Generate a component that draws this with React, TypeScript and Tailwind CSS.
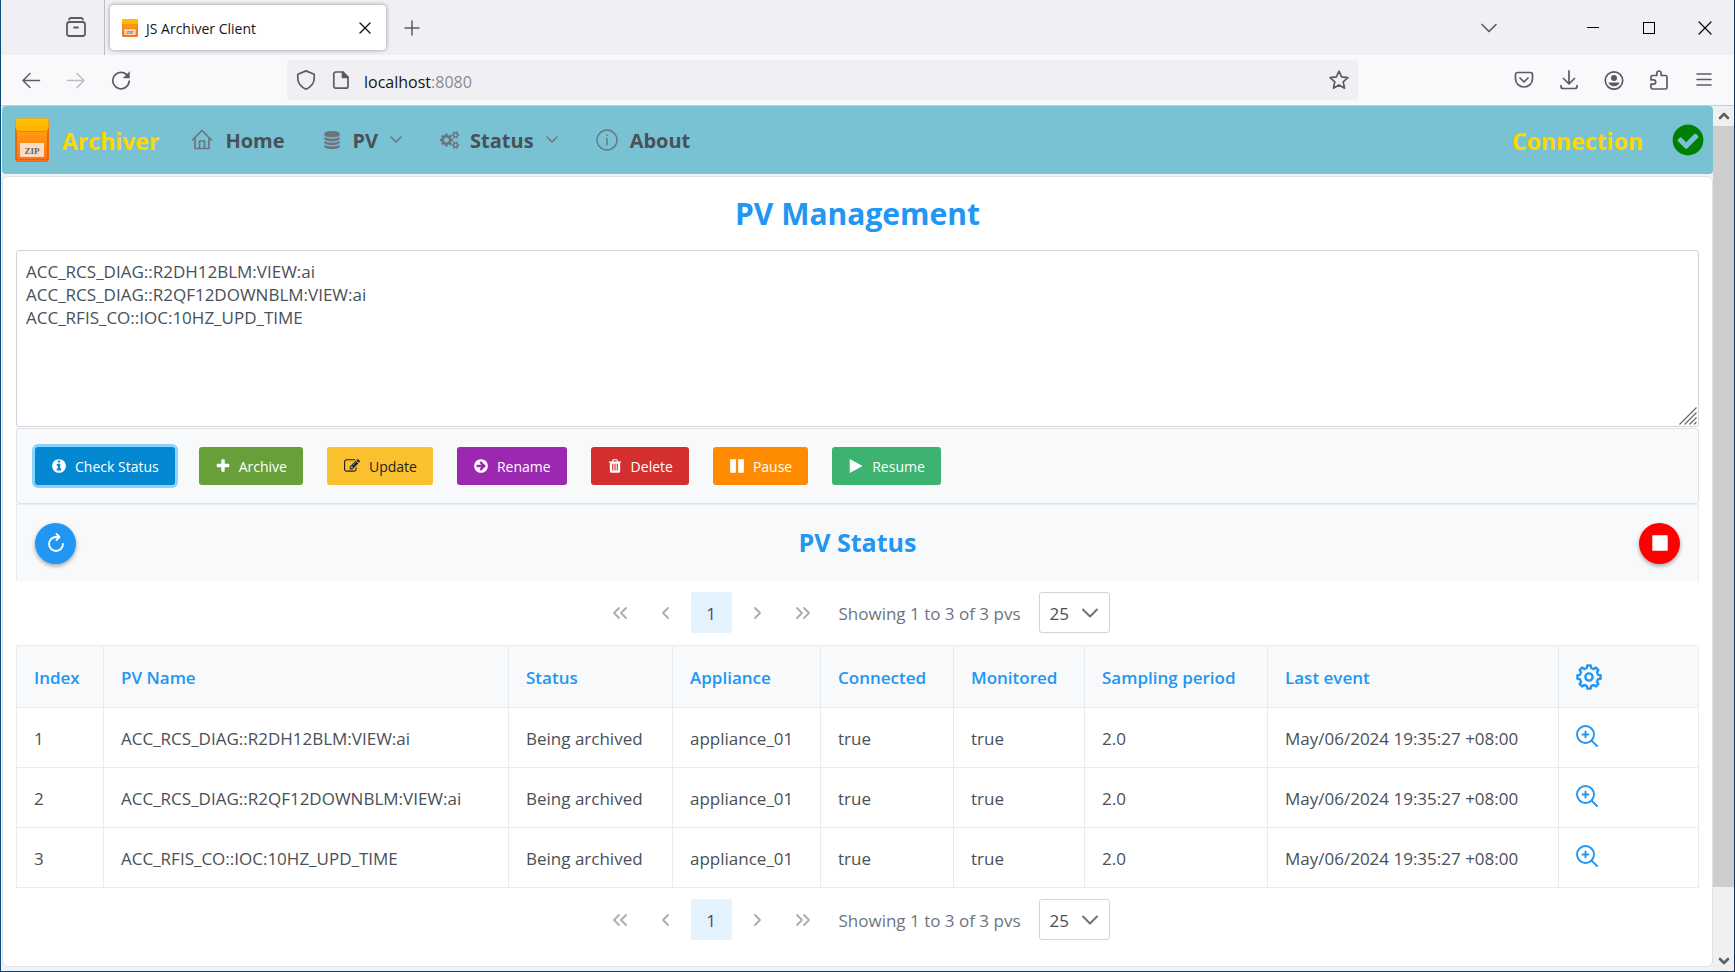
import type { ReactNode } from "react";

const DISC =
  "m252 162q0 209-103 385.5t-279.5 279.5-385.5 103-385.5-103-279.5-279.5-103-385.5 103-385.5 279.5-279.5 385.5-103 385.5 103 279.5 279.5 103 385.5z";

const GLYPHS = {
  info: "M1152 1376v-160q0-14-9-23t-23-9h-96v-512q0-14-9-23t-23-9h-320q-14 0-23 9t-9 23v160q0 14 9 23t23 9h96v320h-96q-14 0-23 9t-9 23v160q0 14 9 23t23 9h448q14 0 23-9t9-23zm-128-896v-160q0-14-9-23t-23-9h-192q-14 0-23 9t-9 23v160q0 14 9 23t23 9h192q14 0 23-9t9-23zm640 416q0 209-103 385.5t-279.5 279.5-385.5 103-385.5-103-279.5-279.5-103-385.5 103-385.5 279.5-279.5 385.5-103 385.5 103 279.5 279.5 103 385.5z",
  plus: "M1600 736v192q0 40-28 68t-68 28h-416v416q0 40-28 68t-68 28h-192q-40 0-68-28t-28-68v-416h-416q-40 0-68-28t-28-68v-192q0-40 28-68t68-28h416v-416q0-40 28-68t68-28h192q40 0 68 28t28 68v416h416q40 0 68 28t28 68z",
  edit: "M888 1184l116-116-152-152-116 116v56h96v96h56zm440-720q-16-16-33 1l-350 350q-17 17-1 33t33-1l350-350q17-17 1-33zm80 594v190q0 119-84.5 203.5t-203.5 84.5h-832q-119 0-203.5-84.5t-84.5-203.5v-832q0-119 84.5-203.5t203.5-84.5h832q63 0 117 25 15 7 18 23 3 17-9 29l-49 49q-14 14-32 8-23-6-45-6h-832q-66 0-113 47t-47 113v832q0 66 47 113t113 47h832q66 0 113-47t47-113v-126q0-13 9-22l64-64q15-15 35-7t20 29zm-96-738l288 288-672 672h-288v-288zm444 132l-92 92-288-288 92-92q28-28 68-28t68 28l152 152q28 28 28 68t-28 68z",
  right:
    "M1413 896q0-27-18-45l-91-91-362-362q-18-18-45-18t-45 18l-91 91q-18 18-18 45t18 45l189 189h-502q-26 0-45 19t-19 45v128q0 26 19 45t45 19h502l-189 189q-19 19-19 45t19 45l91 91q18 18 45 18t45-18l362-362 91-91q18-18 18-45zm251 0q0 209-103 385.5t-279.5 279.5-385.5 103-385.5-103-279.5-279.5-103-385.5 103-385.5 279.5-279.5 385.5-103 385.5 103 279.5 279.5 103 385.5z",
  trash:
    "M704 1376v-704q0-14-9-23t-23-9h-64q-14 0-23 9t-9 23v704q0 14 9 23t23 9h64q14 0 23-9t9-23zm256 0v-704q0-14-9-23t-23-9h-64q-14 0-23 9t-9 23v704q0 14 9 23t23 9h64q14 0 23-9t9-23zm256 0v-704q0-14-9-23t-23-9h-64q-14 0-23 9t-9 23v704q0 14 9 23t23 9h64q14 0 23-9t9-23zm-544-992h448l-48-117q-7-9-17-11h-317q-10 2-17 11zm928 32v64q0 14-9 23t-23 9h-96v948q0 83-47 143.5t-113 60.5h-832q-66 0-113-58.5t-47-141.5v-952h-96q-14 0-23-9t-9-23v-64q0-14 9-23t23-9h309l70-167q15-37 54-63t79-26h320q40 0 79 26t54 63l70 167h309q14 0 23 9t9 23z",
  pause:
    "M1664 192v1408q0 26-19 45t-45 19h-512q-26 0-45-19t-19-45v-1408q0-26 19-45t45-19h512q26 0 45 19t19 45zm-896 0v1408q0 26-19 45t-45 19h-512q-26 0-45-19t-19-45v-1408q0-26 19-45t45-19h512q26 0 45 19t19 45z",
  play: "M1576 927l-1328 738q-23 13-39.500 3t-16.500-36v-1472q0-26 16.500-36t39.500 3l1328 738q23 13 23 31t-23 31z",
  stop: "M1664 192v1408q0 26-19 45t-45 19h-1408q-26 0-45-19t-19-45v-1408q0-26 19-45t45-19h1408q26 0 45 19t19 45z",
  check:
    "M1412 734q0-28-18-46l-91-90q-19-19-45-19t-45 19l-408 407-226-226q-19-19-45-19t-45 19l-91 90q-18 18-18 46 0 27 18 45l362 362q19 19 45 19 27 0 46-19l543-543q18-18 18-45z" +
    DISC,
  database:
    "M896 768q237 0 443-43t325-127v170q0 69-103 128t-280 93.5-385 34.5-385-34.5-280-93.5-103-128v-170q119 84 325 127t443 43zm0 768q237 0 443-43t325-127v170q0 69-103 128t-280 93.5-385 34.5-385-34.5-280-93.5-103-128v-170q119 84 325 127t443 43zm0-384q237 0 443-43t325-127v170q0 69-103 128t-280 93.5-385 34.5-385-34.5-280-93.5-103-128v-170q119 84 325 127t443 43zm0-1152q208 0 385 34.5t280 93.5 103 128v128q0 69-103 128t-280 93.5-385 34.5-385-34.5-280-93.5-103-128v-128q0-69 103-128t280-93.5 385-34.5z",
  cogs: "M896 896q0-106-75-181t-181-75-181 75-75 181 75 181 181 75 181-75 75-181zm768 512q0-52-38-90t-90-38-90 38-38 90q0 53 37.5 90.5t90.5 37.5 90.5-37.5 37.5-90.5zm0-1024q0-52-38-90t-90-38-90 38-38 90q0 53 37.5 90.5t90.5 37.5 90.5-37.5 37.5-90.5zm-384 421v185q0 10-7 19.5t-16 10.5l-155 24q-11 35-32 76 34 48 90 115 7 11 7 20 0 12-7 19-23 30-82.5 89.5t-78.5 59.5q-11 0-21-7l-115-90q-37 19-77 31-11 108-23 155-7 24-30 24h-186q-11 0-20-7.5t-10-17.5l-23-153q-34-10-75-31l-118 89q-7 7-20 7-11 0-21-8-144-133-144-160 0-9 7-19 10-14 41-53t47-61q-23-44-35-82l-152-24q-10-1-17-9.5t-7-19.5v-185q0-10 7-19.5t16-10.5l155-24q11-35 32-76-34-48-90-115-7-11-7-20 0-12 7-20 22-30 82-89t79-59q11 0 21 7l115 90q34-18 77-32 11-108 23-154 7-24 30-24h186q11 0 20 7.5t10 17.5l23 153q34 10 75 31l118-89q8-7 20-7 11 0 21 8 144 133 144 160 0 8-7 19-12 16-42 54t-45 60q23 48 34 82l152 23q10 2 17 10.5t7 19.5zm640 533v140q0 16-149 31-12 27-30 52 51 113 51 138 0 4-4 7-122 71-124 71-8 0-46-47t-52-68q-20 2-30 2t-30-2q-14 21-52 68t-46 47q-2 0-124-71-4-3-4-7 0-25 51-138-18-25-30-52-149-15-149-31v-140q0-16 149-31 13-29 30-52-51-113-51-138 0-4 4-7 4-2 35-20t59-34 30-16q8 0 46 46.5t52 67.5q20-2 30-2t30 2q51-71 92-112l6-2q4 0 124 70 4 3 4 7 0 25-51 138 17 23 30 52 149 15 149 31zm0-1024v140q0 16-149 31-12 27-30 52 51 113 51 138 0 4-4 7-122 71-124 71-8 0-46-47t-52-68q-20 2-30 2t-30-2q-14 21-52 68t-46 47q-2 0-124-71-4-3-4-7 0-25 51-138-18-25-30-52-149-15-149-31v-140q0-16 149-31 13-29 30-52-51-113-51-138 0-4 4-7 4-2 35-20t59-34 30-16q8 0 46 46.5t52 67.5q20-2 30-2t30 2q51-71 92-112l6-2q4 0 124 70 4 3 4 7 0 25-51 138 17 23 30 52 149 15 149 31z",
};

function Glyph({ name, className = "size-4" }: { name: keyof typeof GLYPHS; className?: string }) {
  return (
    <svg viewBox="0 0 1792 1792" fill="currentColor" overflow="visible" aria-hidden="true" className={`shrink-0 ${className}`}>
      <path d={GLYPHS[name]} />
    </svg>
  );
}

function Line({
  children,
  className = "size-5",
  box = 20,
  width = 1.6,
}: {
  children: ReactNode;
  className?: string;
  box?: number;
  width?: number;
}) {
  return (
    <svg
      viewBox={`0 0 ${box} ${box}`}
      fill="none"
      stroke="currentColor"
      strokeWidth={width}
      strokeLinecap="round"
      strokeLinejoin="round"
      aria-hidden="true"
      className={`shrink-0 ${className}`}
    >
      {children}
    </svg>
  );
}

function ZipIcon({ className, id }: { className: string; id: string }) {
  return (
    <svg viewBox="0 0 34 44" preserveAspectRatio="none" aria-hidden="true" className={`shrink-0 ${className}`}>
      <defs>
        <linearGradient id={`${id}-body`} x1="0" y1="0" x2="0" y2="1">
          <stop offset="0" stopColor="#ffae0d" />
          <stop offset="1" stopColor="#ff6f1c" />
        </linearGradient>
        <linearGradient id={`${id}-flap`} x1="0" y1="0" x2="0" y2="1">
          <stop offset="0" stopColor="#ffc400" />
          <stop offset="1" stopColor="#ffb005" />
        </linearGradient>
      </defs>
      <rect x="0.500" y="1" width="33" height="42.500" rx="2.500" fill={`url(#${id}-body)`} stroke="#ee6c10" />
      <path d="M1.500 14v27.500h31V14" fill="none" stroke="#d8600c" strokeWidth="0.800" />
      <path d="M0.500 2.500Q0.500 0.500 2.500 0.500h29Q33.500 0.500 33.500 2.500v8l-2 3h-29l-2-3z" fill={`url(#${id}-flap)`} />
      <path d="M0.500 10.500l2 3h29l2-3" fill="none" stroke="#d9770c" strokeWidth="0.800" />
      <rect x="5" y="25" width="24" height="14" fill="#fcdcc4" />
      <text x="17" y="35.500" textAnchor="middle" fontSize="9" fontWeight="bold" fill="#666" fontFamily="Liberation Serif, serif">
        ZIP
      </text>
    </svg>
  );
}

function ToolButton({ label, children }: { label: string; children: ReactNode }) {
  return (
    <button type="button" aria-label={label} className="flex size-6 items-center justify-center text-[#5b5b66]">
      {children}
    </button>
  );
}

function BrowserChrome() {
  return (
    <header className="shrink-0">
      <div className="flex h-[55px] items-stretch bg-[#f0f0f4]">
        <div className="flex w-[104px] items-center justify-end border-r border-[#bcbcc4] pr-4">
          <ToolButton label="Firefox View">
            <Line className="size-6" box={24} width={1.8}>
              <path d="M5 3.500Q5.500 2 7 2H17Q18.500 2 19 3.500" />
              <rect x="3" y="6" width="18" height="14" rx="2.500" />
              <path d="M10 11.500h4" />
            </Line>
          </ToolButton>
        </div>
        <div className="m-[5px] flex w-[276px] items-center gap-2 rounded bg-white pl-3 pr-[13px] shadow-[0_0_4px_rgba(0,0,0,0.4)]">
          <ZipIcon id="fav" className="h-[18px] w-4" />
          <span className="grow pt-0.5 text-sm text-[#15141a]">JS Archiver Client</span>
          <button type="button" aria-label="Close tab" className="text-[#15141a]">
            <Line className="size-4" box={16} width={1.4}>
              <path d="M3 3l10 10M13 3L3 13" />
            </Line>
          </button>
        </div>
        <div className="flex grow items-center pl-[9px]">
          <ToolButton label="New tab">
            <Line width={1.5} className="size-5">
              <path d="M10 3v14M3 10h14" />
            </Line>
          </ToolButton>
        </div>
        <div className="flex items-center pr-2">
          <ToolButton label="List all tabs">
            <Line className="size-5" width={1.7}>
              <path d="M3 6.500l7 7 7-7" />
            </Line>
          </ToolButton>
          <div className="ml-20 flex gap-8 text-black">
            <button type="button" aria-label="Minimize" className="flex size-6 items-center justify-center">
              <span className="h-px w-3 bg-black" />
            </button>
            <button type="button" aria-label="Maximize" className="flex size-6 items-center justify-center">
              <span className="size-3 border border-black" />
            </button>
            <button type="button" aria-label="Close" className="flex size-6 items-center justify-center">
              <Line className="size-4" box={16} width={1.2}>
                <path d="M2 2l12 12M14 2L2 14" />
              </Line>
            </button>
          </div>
          <span className="w-[9px]" />
        </div>
      </div>

      <div className="flex h-[51px] items-center border-b border-[#cccccf] bg-[#f9f9fb]">
        <div className="flex w-[286px] items-center gap-[21px] pl-[18px]">
          <ToolButton label="Back">
            <Line width={1.5}>
              <path d="M18.500 10.500H2M9 3.500l-7 7 7 7" />
            </Line>
          </ToolButton>
          <button type="button" aria-label="Forward" disabled className="flex size-6 items-center justify-center text-[#bcbcc2]">
            <Line width={1.5}>
              <path d="M1.500 10.500H18M11 3.500l7 7-7 7" />
            </Line>
          </button>
          <ToolButton label="Reload">
            <Line width={1.7}>
              <path d="M18.200 11A8.200 8.200 0 1 1 15.500 4.500" />
              <path d="M18.500 2v6h-6z" fill="currentColor" strokeWidth="0.500" />
            </Line>
          </ToolButton>
        </div>
        <div className="flex h-10 min-w-0 grow items-center gap-[11px] rounded bg-[#f0f0f4] px-[7px]">
          <ToolButton label="Tracking protection">
            <Line width={1.7}>
              <path d="M10 0.900L18.200 4.200V8.500Q18 15.500 10 19.200 2 15.500 1.800 8.500V4.200z" />
            </Line>
          </ToolButton>
          <ToolButton label="Site information">
            <Line width={1.7}>
              <path d="M4.800 2H12l5 5v9.200a2 2 0 0 1-2 2H4.800a2 2 0 0 1-2-2V4a2 2 0 0 1 2-2z" />
              <path d="M11.500 2v5.500H17z" fill="currentColor" />
            </Line>
          </ToolButton>
          <div className="grow pt-1 text-base text-[#15141a]">
            localhost<span className="text-[#8a8a93]">:8080</span>
          </div>
          <ToolButton label="Bookmark this page">
            <Line width={1.7}>
              <path d="M10 1.200L12.600 6.900 18.900 7.600 14.200 11.800 15.500 18.200 10 15 4.500 18.200 5.800 11.800 1.100 7.600 7.400 6.900z" />
            </Line>
          </ToolButton>
        </div>
        <div className="flex w-[376px] items-center justify-end gap-[21px] pr-[18px]">
          <ToolButton label="Save to Pocket">
            <Line width={1.7}>
              <path d="M3.500 2.500h13a2 2 0 0 1 2 2V9a8.500 8 0 0 1-17 0V4.500a2 2 0 0 1 2-2z" />
              <path d="M6 8l4 4 4-4" />
            </Line>
          </ToolButton>
          <ToolButton label="Downloads">
            <Line width={1.7}>
              <path d="M10 0.900v12.500M4.500 8.500L10 13.800l5.500-5.300M2 15.500v1a2 2 0 0 0 2 2h12a2 2 0 0 0 2-2v-1" />
            </Line>
          </ToolButton>
          <ToolButton label="Account">
            <Line width={1.7}>
              <circle cx="10" cy="10.500" r="8.700" />
              <circle cx="10" cy="8" r="3" fill="currentColor" stroke="none" />
              <path d="M4.500 12.500h11Q14.200 16.300 10 16.300T4.500 12.500z" fill="currentColor" stroke="none" />
            </Line>
          </ToolButton>
          <ToolButton label="Extensions">
            <Line width={1.7}>
              <path d="M3.500 5.500H7.800V3.200a2.200 2.200 0 0 1 4.400 0V5.500H16.500a1.500 1.500 0 0 1 1.500 1.500V17.500a1.500 1.500 0 0 1-1.500 1.500H3.500A1.500 1.500 0 0 1 2 17.500V14.200H4.500a2.200 2.200 0 0 0 0-4.400H2V7a1.500 1.500 0 0 1 1.500-1.500z" />
            </Line>
          </ToolButton>
          <ToolButton label="Application menu">
            <Line width={1.600}>
              <path d="M3 4h14M3 9.500h14M3 15h14" />
            </Line>
          </ToolButton>
        </div>
      </div>
    </header>
  );
}

function NavChevron() {
  return (
    <Line className="size-3 text-[#6c757d]" box={12} width={1.6}>
      <path d="M1 3l5 5 5-5" />
    </Line>
  );
}

function NavItem({ label, icon, menu }: { label: string; icon: ReactNode; menu?: boolean }) {
  return (
    <li>
      <a href="#" className="flex items-center gap-3 text-[#495057]">
        <span className="text-[#6c757d]">{icon}</span>
        <span className="pt-0.5 text-xl font-bold">{label}</span>
        {menu && <NavChevron />}
      </a>
    </li>
  );
}

function NavBar() {
  return (
    <nav className="flex h-[68px] items-center rounded-sm bg-[#78c2d4] pl-[13px] pr-[7px]">
      <ZipIcon id="logo" className="h-11 w-[34px]" />
      <span className="ml-[13px] pt-0.5 text-[23px] font-bold text-[#ffd700]">Archiver</span>
      <ul className="ml-8 flex grow items-center gap-[38px]">
        <NavItem
          label="Home"
          icon={
            <Line box={22} width={1.7} className="size-[22px]">
              <path d="M1.500 11L11 1.500l9.500 9.500M4 9v10.500H18V9M8.500 19.500V12h5V19.500" />
            </Line>
          }
        />
        <NavItem label="PV" menu icon={<Glyph name="database" className="size-[18px]" />} />
        <NavItem label="Status" menu icon={<Glyph name="cogs" className="size-[18px]" />} />
        <NavItem
          label="About"
          icon={
            <Line box={22} width={1.4} className="size-[22px]">
              <circle cx="11" cy="11" r="10" />
              <path d="M11 9.500v6.500M11 6v0.500" />
            </Line>
          }
        />
      </ul>
      <span className="mr-[27px] pt-0.5 text-[23px] font-bold text-[#ffd700]">Connection</span>
      <Glyph name="check" className="size-9 text-[#008000]" />
    </nav>
  );
}

const ACTIONS: { label: string; glyph: keyof typeof GLYPHS; icon: string; className: string }[] = [
  { label: "Check Status", glyph: "info", icon: "size-4", className: "bg-[#0388d1] text-white shadow-[0_0_0_3px_#89d4fe]" },
  { label: "Archive", glyph: "plus", icon: "size-4", className: "bg-[#689f38] text-white" },
  { label: "Update", glyph: "edit", icon: "h-4 w-[18px]", className: "bg-[#fbc02d] text-[#212529]" },
  { label: "Rename", glyph: "right", icon: "size-4", className: "bg-[#9c27b0] text-white" },
  { label: "Delete", glyph: "trash", icon: "size-4", className: "bg-[#d32f2f] text-white" },
  { label: "Pause", glyph: "pause", icon: "size-4", className: "bg-[#ff8c00] text-white" },
  { label: "Resume", glyph: "play", icon: "size-4", className: "bg-[#3cb371] text-white" },
];

function PageButton({ label, children }: { label: string; children: ReactNode }) {
  return (
    <button type="button" disabled aria-label={label} className="flex size-[42px] items-center justify-center text-[#a7acb1]">
      <Line className="size-4" box={16} width={1.8}>
        {children}
      </Line>
    </button>
  );
}

function Paginator() {
  return (
    <div className="flex h-16 items-center justify-center gap-1 pr-1.5 pb-px">
      <PageButton label="First page">
        <path d="M7 3L2 8l5 5M14 3L9 8l5 5" />
      </PageButton>
      <PageButton label="Previous page">
        <path d="M10 3L5 8l5 5" />
      </PageButton>
      <button type="button" aria-current="page" className="h-[41px] w-[41px] rounded-[3px] bg-[#e3f2fd] pt-0.5 text-[17px] text-[#495057]">
        1
      </button>
      <PageButton label="Next page">
        <path d="M6 3l5 5-5 5" />
      </PageButton>
      <PageButton label="Last page">
        <path d="M2 3l5 5-5 5M9 3l5 5-5 5" />
      </PageButton>
      <span className="px-[11px] pt-0.5 text-[17px] text-[#6c757d]">Showing 1 to 3 of 3 pvs</span>
      <div className="relative ml-1">
        <select
          aria-label="Rows per page"
          defaultValue="25"
          className="block h-[41px] w-[71px] appearance-none rounded-[3px] border border-[#ced4da] bg-white pt-0.5 pl-[9px] text-[17px] text-[#495057]"
        >
          <option>25</option>
          <option>50</option>
          <option>100</option>
        </select>
        <span className="pointer-events-none absolute inset-y-0 right-3 flex items-center text-[#6c757d]">
          <Line className="size-4" box={16} width={2}>
            <path d="M1 4.500l7 7 7-7" />
          </Line>
        </span>
      </div>
    </div>
  );
}

const COLUMNS = [
  { name: "Index", width: "w-[87px]" },
  { name: "PV Name", width: "" },
  { name: "Status", width: "w-[164px]" },
  { name: "Appliance", width: "w-[148px]" },
  { name: "Connected", width: "w-[133px]" },
  { name: "Monitored", width: "w-[131px]" },
  { name: "Sampling period", width: "w-[183px]" },
  { name: "Last event", width: "w-[291px]" },
];

const PVS = ["ACC_RCS_DIAG::R2DH12BLM:VIEW:ai", "ACC_RCS_DIAG::R2QF12DOWNBLM:VIEW:ai", "ACC_RFIS_CO::IOC:10HZ_UPD_TIME"];

function StatusTable() {
  return (
    <table className="w-full table-fixed border-collapse text-left text-[17px] whitespace-nowrap text-[#495057]">
      <thead>
        <tr className="h-[62px] bg-[#f8f9fa] text-[#2196f3]">
          {COLUMNS.map((column) => (
            <th key={column.name} className={`border border-[#e9ecef] px-[17px] pt-0.5 font-semibold ${column.width}`}>
              {column.name}
            </th>
          ))}
          <th className="w-[140px] border border-[#e9ecef] px-[17px]">
            <button type="button" aria-label="Table settings" className="block">
              <Line box={26} width={2.4} className="size-[26px]">
                <path d="M10.900 3.900L11.300 1.400H14.700L15.100 3.900L17.900 5.100L20 3.600L22.400 6L20.900 8.100L22.100 10.900L24.600 11.300V14.700L22.100 15.100L20.900 17.900L22.400 20L20 22.400L17.900 20.900L15.100 22.100L14.700 24.600H11.300L10.900 22.100L8.100 20.900L6 22.400L3.600 20L5.100 17.900L3.900 15.100L1.400 14.700V11.300L3.900 10.900L5.100 8.100L3.600 6L6 3.600L8.100 5.100z" />
                <circle cx="13" cy="13" r="3.600" />
              </Line>
            </button>
          </th>
        </tr>
      </thead>
      <tbody>
        {PVS.map((pv, index) => (
          <tr key={pv} className="h-[60px]">
            {[index + 1, pv, "Being archived", "appliance_01", "true", "true", "2.0", "May/06/2024 19:35:27 +08:00"].map((value, cell) => (
              <td key={cell} className="border border-[#e9ecef] px-[17px] pt-0.5">
                {value}
              </td>
            ))}
            <td className="border border-[#e9ecef] px-[17px] pb-1">
              <button type="button" aria-label={`Details of ${pv}`} className="block text-[#2196f3]">
                <Line box={22} width={1.9} className="size-[22px]">
                  <circle cx="9.500" cy="9.500" r="8.500" />
                  <path d="M15.600 15.600L21 21M9.500 6.500v6M6.500 9.500h6" />
                </Line>
              </button>
            </td>
          </tr>
        ))}
      </tbody>
    </table>
  );
}

function ScrollBar() {
  return (
    <div aria-hidden="true" className="flex w-[21px] shrink-0 flex-col items-center bg-[#f0f0f0] text-[#606060]">
      <div className="flex h-5 items-center">
        <Line className="size-3" box={12} width={2.600}>
          <path d="M2 8l4-4 4 4" />
        </Line>
      </div>
      <div className="w-full flex-[760] bg-[#cdcdcd]" />
      <div className="flex-[64]" />
      <div className="flex h-5 items-center">
        <Line className="size-3" box={12} width={2.600}>
          <path d="M2 4l4 4 4-4" />
        </Line>
      </div>
    </div>
  );
}

export default function App() {
  return (
    <div className="flex min-h-screen flex-col border-x border-b border-l-[#0f4c75] border-r-[#1b2f57] border-b-[#1b3f5f] bg-[#eff3f8] font-['Open_Sans','Noto_Sans',sans-serif]">
      <BrowserChrome />
      <div className="flex grow">
        <main className="flex min-w-0 grow flex-col pl-px">
          <NavBar />
          <div className="mt-0.5 mb-1 grow rounded-md border border-[#dee2e6] bg-white px-[13px]">
            <h1 className="flex h-[73px] items-center justify-center text-[30px] font-bold text-[#2196f3]">PV Management</h1>
            <div className="relative">
              <textarea
                aria-label="PV names"
                spellCheck={false}
                defaultValue={PVS.join("\n")}
                className="block h-[177px] w-full resize-none rounded-[3px] border border-[#ced4da] bg-white px-[9px] py-[9px] text-[17px] leading-[23px] text-[#495057]"
              />
              <svg viewBox="0 0 18 18" stroke="#6b6b6b" strokeWidth="1.300" aria-hidden="true" className="pointer-events-none absolute right-0.5 bottom-0.5 size-[18px]">
                <path d="M0.500 17.500l17-17M5.500 17.500l12-12M10.500 17.500l7-7M15 17.500l2.500-2.500" />
              </svg>
            </div>
            <div className="mt-px flex h-[76px] items-center gap-6 rounded-[3px] border border-[#dee2e6] bg-[#f8f9fa] px-[18px]">
              {ACTIONS.map((action) => (
                <button key={action.label} type="button" className={`flex h-[38px] items-center gap-2 rounded-[3px] px-4 text-sm ${action.className}`}>
                  <Glyph name={action.glyph} className={action.icon} />
                  <span className="pt-0.5">{action.label}</span>
                </button>
              ))}
            </div>
            <section className="flex h-[77px] items-center justify-between border-x border-t border-[#e9ecef] bg-[#f8f9fa] px-[18px]">
              <button
                type="button"
                aria-label="Refresh"
                className="flex size-[41px] items-center justify-center rounded-full bg-[#2196f3] text-white shadow-[0_2px_4px_rgba(0,0,0,0.35)]"
              >
                <Line className="size-5" width={1.8}>
                  <path d="M17 11A7 7 0 1 1 10 4h3M10.500 1l3 3-3 3" />
                </Line>
              </button>
              <h2 className="text-[25px] font-bold text-[#2196f3]">PV Status</h2>
              <button
                type="button"
                aria-label="Stop"
                className="flex size-[41px] items-center justify-center rounded-full bg-[#ff0000] text-white shadow-[0_2px_4px_rgba(0,0,0,0.35)]"
              >
                <Glyph name="stop" className="size-[18px]" />
              </button>
            </section>
            <Paginator />
            <StatusTable />
            <Paginator />
          </div>
        </main>
        <ScrollBar />
      </div>
    </div>
  );
}
